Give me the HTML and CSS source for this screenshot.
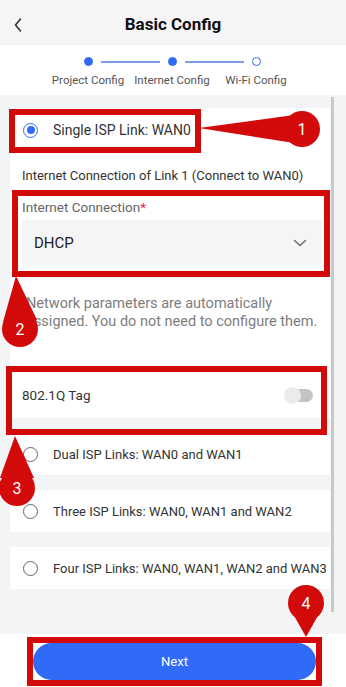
FILE: index.html
```html
<!DOCTYPE html>
<html>
<head>
<meta charset="utf-8">
<link rel="stylesheet" href="styles.css">
</head>
<body>
<div class="screen">
  <header class="topbar">
    <svg class="back" width="10" height="16" viewBox="0 0 10 16"><path d="M7.5 2 L2.5 8 L7.5 14" fill="none" stroke="#333" stroke-width="1.6" stroke-linecap="round" stroke-linejoin="round"/></svg>
    <h1 class="title">Basic Config</h1>
  </header>
  <nav class="stepper">
    <div class="step done line"><span class="dot"></span><span class="step-label">Project Config</span></div>
    <div class="step done line"><span class="dot"></span><span class="step-label">Internet Config</span></div>
    <div class="step"><span class="dot"></span><span class="step-label">Wi-Fi Config</span></div>
  </nav>
  <main class="content">
    <section class="card card-main">
      <div class="radio-row"><span class="radio checked"></span><span>Single ISP Link: WAN0</span></div>
      <div class="subhead">Internet Connection of Link 1 (Connect to WAN0)</div>
      <div class="field-label">Internet Connection<span class="req">*</span></div>
      <div class="select">
        <span>DHCP</span>
        <svg width="14" height="8" viewBox="0 0 14 8"><path d="M1.5 1.5 L7 6.5 L12.5 1.5" fill="none" stroke="#666" stroke-width="1.4" stroke-linecap="round" stroke-linejoin="round"/></svg>
      </div>
      <p class="desc">Network parameters are automatically assigned. You do not need to configure them.</p>
      <div class="toggle-row"><span>802.1Q Tag</span><span class="toggle"><span class="knob"></span></span></div>
    </section>
    <section class="card radio-row"><span class="radio"></span><span>Dual ISP Links: WAN0 and WAN1</span></section>
    <section class="card radio-row"><span class="radio"></span><span>Three ISP Links: WAN0, WAN1 and WAN2</span></section>
    <section class="card radio-row"><span class="radio"></span><span>Four ISP Links: WAN0, WAN1, WAN2 and WAN3</span></section>
  </main>
  <footer class="footer">
    <button class="next">Next</button>
  </footer>
  <div class="scrollbar"></div>
  <svg class="annot" width="346" height="687" viewBox="0 0 346 687">
    <g fill="none" stroke="#d30a0a" stroke-width="6">
      <rect x="12" y="112" width="186" height="38"/>
      <rect x="15" y="193" width="312" height="81"/>
      <rect x="9" y="369" width="315" height="63"/>
      <rect x="30" y="640" width="289" height="43"/>
    </g>
    <g fill="#d30a0a">
      <path d="M199 128 L294 115 L294 143 Z"/>
      <circle cx="302" cy="129" r="18"/>
      <path d="M16 276 L3 322 L37 320 Z"/>
      <circle cx="20" cy="329" r="18"/>
      <path d="M15 436 L0 478 L34 478 Z"/>
      <circle cx="17" cy="488" r="18"/>
      <path d="M306 637 L292 612 L320 612 Z"/>
      <circle cx="306" cy="603" r="18"/>
    </g>
    <g class="num" fill="#fff" text-anchor="middle">
      <text x="302" y="135">1</text>
      <text x="20" y="335">2</text>
      <text x="17" y="494">3</text>
      <text x="306" y="609">4</text>
    </g>
  </svg>
</div>
</body>
</html>
```
FILE: styles.css
```css
* { box-sizing: border-box; }
html, body { margin: 0; padding: 0; }
body {
  width: 346px;
  height: 687px;
  overflow: hidden;
  font-family: Roboto, "Liberation Sans", sans-serif;
  color: #333;
  background: #f3f4f6;
}
.screen {
  position: relative;
  width: 346px;
  height: 687px;
  display: flex;
  flex-direction: column;
}
.topbar {
  height: 45px;
  background: #f5f5f7;
  display: flex;
  align-items: center;
  justify-content: center;
  position: relative;
  padding-top: 3px;
}
.back { position: absolute; left: 13px; top: 17px; }
.title {
  margin: 0;
  font-size: 17px;
  font-weight: 700;
  color: #111;
}
.stepper {
  height: 50px;
  background: #fff;
  display: flex;
  padding-left: 46px;
  padding-top: 12px;
}
.step {
  width: 84px;
  display: flex;
  flex-direction: column;
  align-items: center;
  position: relative;
}
.dot {
  width: 9px;
  height: 9px;
  border-radius: 50%;
  border: 1.3px solid #2f6bf7;
  background: #fff;
}
.step.done .dot { background: #2f6bf7; }
.step.line::after {
  content: "";
  position: absolute;
  top: 4px;
  left: 55px;
  width: 59px;
  height: 1.5px;
  background: #7f9ee8;
}
.step-label {
  margin-top: 7px;
  font-size: 11.5px;
  color: #555;
  white-space: nowrap;
}
.content {
  flex: 1;
  padding: 13px 16px 0 10px;
  display: flex;
  flex-direction: column;
  gap: 15px;
}
.card {
  background: #fff;
  width: 320px;
}
.card-main {
  height: 310px;
}
.radio-row {
  height: 42px;
  display: flex;
  align-items: center;
  padding-left: 13px;
  gap: 15px;
  font-size: 13px;
  color: #333;
  white-space: nowrap;
}
.card-main .radio-row { height: 44px; font-size: 14px; }
.radio {
  width: 15px;
  height: 15px;
  border-radius: 50%;
  border: 1.5px solid #666;
  flex: none;
  display: flex;
  align-items: center;
  justify-content: center;
}
.radio.checked { border-color: #2f6bf7; }
.radio.checked::after {
  content: "";
  width: 8px;
  height: 8px;
  border-radius: 50%;
  background: #2f6bf7;
}
.subhead {
  margin-top: 14px;
  padding-left: 12px;
  font-size: 13px;
  line-height: 20px;
  color: #333;
  white-space: nowrap;
}
.field-label {
  margin-top: 12px;
  padding-left: 12px;
  font-size: 13.5px;
  line-height: 18px;
  color: #666;
}
.req { color: #e0245e; }
.select {
  margin: 4px 8px 0 12px;
  height: 45px;
  background: #f5f5f7;
  border-radius: 4px;
  display: flex;
  align-items: center;
  justify-content: space-between;
  padding: 0 15px 0 12px;
  font-size: 15px;
  color: #222;
}
.desc {
  margin: 30px 0 0;
  padding: 0 8px 0 16px;
  font-size: 14.5px;
  line-height: 18px;
  color: #7d7d7d;
}
.toggle-row {
  margin-top: 41px;
  height: 46px;
  display: flex;
  align-items: center;
  justify-content: space-between;
  padding: 0 17px 0 12px;
  font-size: 13.5px;
  color: #333;
}
.toggle {
  width: 28px;
  height: 13px;
  border-radius: 7px;
  background: #c4c4c4;
  position: relative;
}
.knob {
  position: absolute;
  left: -1px;
  top: -2px;
  width: 17px;
  height: 17px;
  border-radius: 50%;
  background: #ebebeb;
}
.footer {
  height: 53px;
  background: #fff;
  padding: 9px 30px 0 33px;
}
.next {
  width: 283px;
  height: 37px;
  border: none;
  border-radius: 19px;
  background: #2f6bf7;
  color: #fff;
  font-family: Roboto, "Liberation Sans", sans-serif;
  font-size: 13px;
  padding: 0;
}
.scrollbar {
  position: absolute;
  left: 331px;
  top: 97px;
  width: 3px;
  height: 515px;
  background: #c9c9c9;
}
.annot {
  position: absolute;
  left: 0;
  top: 0;
  pointer-events: none;
}
.num text {
  font-family: Roboto, "Liberation Sans", sans-serif;
  font-size: 16px;
}
```
